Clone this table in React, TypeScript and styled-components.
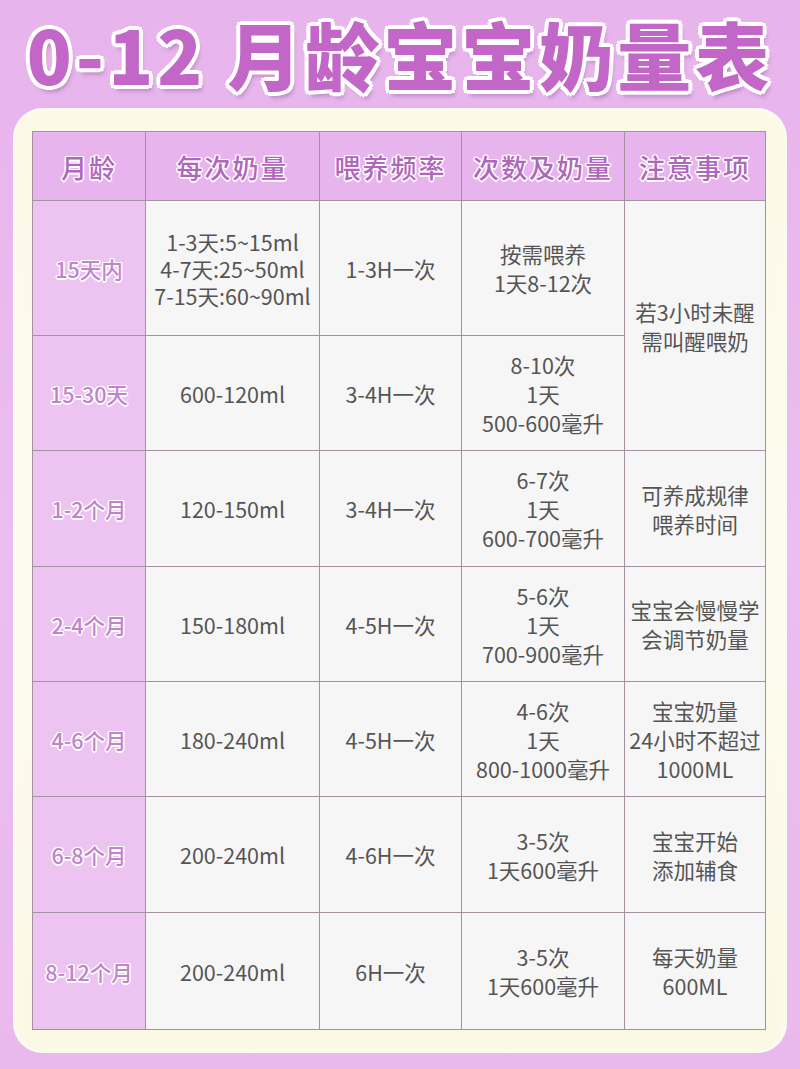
import styled, { createGlobalStyle } from "styled-components";

const GlobalStyle = createGlobalStyle`
  html, body {
    margin: 0;
    padding: 0;
    background: #e9b9ee;
  }
  * {
    box-sizing: border-box;
  }
`

const Page = styled.div`
  width: 800px;
  height: 1069px;
  overflow: hidden;
  background: linear-gradient(180deg, #e7b4ec 0%, #ebbdf0 50%, #e9b9ee 100%);
  font-family: "Noto Sans CJK SC", "Noto Sans", sans-serif;
  display: flex;
  flex-direction: column;
  align-items: center;
`

const Title = styled.h1`
  margin: 0;
  height: 108px;
  padding-top: 8px;
  font-size: 74px;
  line-height: 90px;
  font-weight: 900;
  letter-spacing: 4px;
  color: #c266c8;
  white-space: nowrap;
  text-shadow:
    3px 0 0 #fff, -3px 0 0 #fff, 0 3px 0 #fff, 0 -3px 0 #fff,
    2px 2px 0 #fff, -2px 2px 0 #fff, 2px -2px 0 #fff, -2px -2px 0 #fff,
    4px 0 0 #fff, -4px 0 0 #fff, 0 4px 0 #fff, 0 -4px 0 #fff,
    3px 3px 0 #fff, -3px 3px 0 #fff, 3px -3px 0 #fff, -3px -3px 0 #fff,
    3px 6px 4px rgba(140, 80, 150, 0.45);
`

const Card = styled.div`
  width: 774px;
  padding: 23px 21px 23px 19px;
  border-radius: 30px;
  background: linear-gradient(180deg, #fcf9e6 0%, #fdfbee 50%, #fbf8e4 100%);
  box-shadow: inset 0 0 10px rgba(255, 255, 255, 0.9);
`

const Table = styled.div`
  display: grid;
  grid-template-columns: 112px 173px 141px 162px 140px;
  grid-template-rows: 68px 134px 114px 115px 114px 114px 115px 116px;
  gap: 1px;
  padding: 1px;
  background: #a4919f;
`

const outline =
  "1.5px 0 0 #fff, -1.5px 0 0 #fff, 0 1.5px 0 #fff, 0 -1.5px 0 #fff, 1px 1px 0 #fff, -1px -1px 0 #fff, 1px -1px 0 #fff, -1px 1px 0 #fff";

const Cell = styled.div<{ $kind?: "head" | "age" | "body"; $span?: number }>`
  display: flex;
  align-items: center;
  justify-content: center;
  text-align: center;
  white-space: nowrap;
  grid-row: ${(p) => (p.$span ? `span ${p.$span}` : "auto")};
  background: ${(p) =>
    p.$kind === "head" ? "#e8b4ed" : p.$kind === "age" ? "#ecc3f1" : "#f7f6f6"};
  color: ${(p) =>
    p.$kind === "head" ? "#b066bc" : p.$kind === "age" ? "#c084cc" : "#555555"};
  font-size: ${(p) => (p.$kind === "head" ? "26px" : "21.5px")};
  font-weight: ${(p) => (p.$kind === "body" ? 400 : 500)};
  letter-spacing: ${(p) => (p.$kind === "head" ? "2px" : "0")};
  line-height: 29px;
  text-shadow: ${(p) => (p.$kind === "body" ? "none" : outline)};
`

const Lines = styled.span<{ $tight?: boolean }>`
  display: block;
  line-height: ${(p) => (p.$tight ? "27px" : "29px")};
`

const headers = ["月龄", "每次奶量", "喂养频率", "次数及奶量", "注意事项"];

type Row = {
  age: string;
  amount: string[];
  freq: string;
  times: string[];
  note?: string[];
  noteSpan?: number;
};

const rows: Row[] = [
  {
    age: "15天内",
    amount: ["1-3天:5~15ml", "4-7天:25~50ml", "7-15天:60~90ml"],
    freq: "1-3H一次",
    times: ["按需喂养", "1天8-12次"],
    note: ["若3小时未醒", "需叫醒喂奶"],
    noteSpan: 2,
  },
  { age: "15-30天", amount: ["600-120ml"], freq: "3-4H一次", times: ["8-10次", "1天", "500-600毫升"] },
  {
    age: "1-2个月",
    amount: ["120-150ml"],
    freq: "3-4H一次",
    times: ["6-7次", "1天", "600-700毫升"],
    note: ["可养成规律", "喂养时间"],
  },
  {
    age: "2-4个月",
    amount: ["150-180ml"],
    freq: "4-5H一次",
    times: ["5-6次", "1天", "700-900毫升"],
    note: ["宝宝会慢慢学", "会调节奶量"],
  },
  {
    age: "4-6个月",
    amount: ["180-240ml"],
    freq: "4-5H一次",
    times: ["4-6次", "1天", "800-1000毫升"],
    note: ["宝宝奶量", "24小时不超过", "1000ML"],
  },
  {
    age: "6-8个月",
    amount: ["200-240ml"],
    freq: "4-6H一次",
    times: ["3-5次", "1天600毫升"],
    note: ["宝宝开始", "添加辅食"],
  },
  {
    age: "8-12个月",
    amount: ["200-240ml"],
    freq: "6H一次",
    times: ["3-5次", "1天600毫升"],
    note: ["每天奶量", "600ML"],
  },
];

const Multi = ({ lines, tight }: { lines: string[]; tight?: boolean }) => (
  <div>
    {lines.map((l) => (
      <Lines key={l} $tight={tight}>{l}</Lines>
    ))}
  </div>
);

export default function App() {
  return (
    <Page>
      <GlobalStyle />
      <Title>0-12 月龄宝宝奶量表</Title>
      <Card>
        <Table>
          {headers.map((h) => (
            <Cell key={h} $kind="head">{h}</Cell>
          ))}
          {rows.map((r) => [
            <Cell key={r.age + "a"} $kind="age">{r.age}</Cell>,
            <Cell key={r.age + "b"} $kind="body">
              <Multi lines={r.amount} tight />
            </Cell>,
            <Cell key={r.age + "c"} $kind="body">{r.freq}</Cell>,
            <Cell key={r.age + "d"} $kind="body">
              <Multi lines={r.times} />
            </Cell>,
            r.note ? (
              <Cell key={r.age + "e"} $kind="body" $span={r.noteSpan}>
                <Multi lines={r.note} />
              </Cell>
            ) : null,
          ])}
        </Table>
      </Card>
    </Page>
  );
}
